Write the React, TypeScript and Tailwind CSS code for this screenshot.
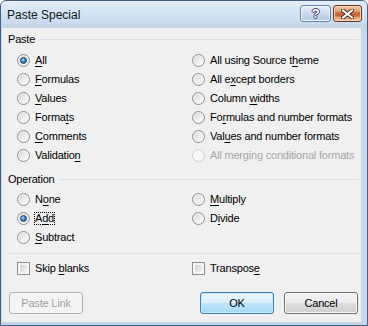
import React from "react";

const U = ({ c }: { c: string }) => <span className="underline decoration-1 underline-offset-[2px]">{c}</span>;

function Radio({ checked = false, disabled = false }: { checked?: boolean; disabled?: boolean }) {
  return (
    <span
      className={
        disabled
          ? "flex w-[13px] h-[13px] shrink-0 rounded-full border border-[#cfd1d3] bg-[#f7f7f7] items-center justify-center"
          : "flex w-[13px] h-[13px] shrink-0 rounded-full border border-[#8e8f8f] bg-gradient-to-br from-[#d2d2d2] via-[#ececec] to-[#ffffff] items-center justify-center shadow-[inset_0_0_0_1px_#f4f4f4]"
      }
    >
      {checked && (
        <span className="block w-[7px] h-[7px] rounded-full bg-[radial-gradient(circle_at_38%_35%,#b9dcfb_0%,#4c8fd2_40%,#12427e_100%)] border border-[#1d3f6e]" />
      )}
    </span>
  );
}

function Check() {
  return (
    <span className="flex w-[13px] h-[13px] shrink-0 border border-[#8e8f8f] bg-[#f6f6f6] p-[2px]">
      <span className="block flex-1 bg-gradient-to-br from-[#cdd3cf] to-[#f5f7f5]" />
    </span>
  );
}

function Row({ children, checked, disabled }: { children: React.ReactNode; checked?: boolean; disabled?: boolean }) {
  return (
    <div className="h-[19px] flex items-center gap-[5px] whitespace-nowrap">
      <Radio checked={checked} disabled={disabled} />
      <span className={disabled ? "text-[#a7a7a7] leading-[13px]" : "text-black leading-[13px]"}>{children}</span>
    </div>
  );
}

function Header({ label }: { label: string }) {
  return (
    <div className="h-[14px] flex items-center gap-[5px]">
      <span className="text-black leading-[14px]">{label}</span>
      <span className="flex-1 h-px bg-[#d5dfe7]" />
    </div>
  );
}

export default function App() {
  return (
    <div
      className="w-[368px] h-[326px] flex flex-col bg-[#c3d6ea] border border-[#45607e] rounded-t-[6px] overflow-hidden text-[11px] tracking-[-0.2px]"
      style={{ fontFamily: '"Liberation Sans", Arial, sans-serif' }}
    >
      <div className="h-[27px] shrink-0 flex items-start pl-[6px] pr-[5px] bg-gradient-to-b from-[#e3edf8] via-[#d2e2f2] to-[#c3d6ea]">
        <span className="text-[12px] leading-[12px] mt-[8px] text-[#101820] tracking-normal">Paste Special</span>
        <div className="ml-auto mt-[4px] flex gap-[2px]">
          <div className="w-[31px] h-[17px] rounded-[3px] border border-[#6c86a3] bg-gradient-to-b from-[#e4eef8] via-[#c9dbee] to-[#b3cbe3] flex items-center justify-center shadow-[inset_0_0_0_1px_#edf3fa]">
            <span
              className="text-[13px] font-bold leading-[13px] text-white"
              style={{ textShadow: "1px 0 0 #4a3a6a, -1px 0 0 #4a3a6a, 0 1px 0 #4a3a6a, 0 -1px 0 #4a3a6a" }}
            >
              ?
            </span>
          </div>
          <div className="w-[29px] h-[17px] rounded-[3px] border border-[#6b3a20] bg-[linear-gradient(to_bottom,#efc7a3_0%,#e3a678_35%,#c9683a_45%,#c9683a_65%,#e7ae82_80%,#efc09a_100%)] flex items-center justify-center shadow-[inset_0_0_0_1px_#f3d2b6]">
            <svg width="13" height="10" viewBox="0 0 13 10">
              <path d="M2 1.5 L11 8.5 M11 1.5 L2 8.5" stroke="#4a2a2a" strokeWidth="4" strokeLinecap="square" />
              <path d="M2 1.5 L11 8.5 M11 1.5 L2 8.5" stroke="#ffffff" strokeWidth="2" strokeLinecap="square" />
            </svg>
          </div>
        </div>
      </div>
      <div className="flex-1 flex pl-[1px] pr-[6px] pb-[3px]">
        <div className="flex-1 bg-[#f0f0f0] pl-[6px] pr-[2px] pt-[4px] flex flex-col">
          <Header label="Paste" />
          <div className="mt-[5px] pl-[9px] grid grid-cols-[175px_1fr]">
            <div className="flex flex-col">
              <Row checked><U c="A" />ll</Row>
              <Row><U c="F" />ormulas</Row>
              <Row><U c="V" />alues</Row>
              <Row>Forma<U c="t" />s</Row>
              <Row><U c="C" />omments</Row>
              <Row>Validatio<U c="n" /></Row>
            </div>
            <div className="flex flex-col">
              <Row>All using Source t<U c="h" />eme</Row>
              <Row>All e<U c="x" />cept borders</Row>
              <Row>Column <U c="w" />idths</Row>
              <Row>Fo<U c="r" />mulas and number formats</Row>
              <Row>Val<U c="u" />es and number formats</Row>
              <Row disabled>All merging conditional formats</Row>
            </div>
          </div>
          <div className="mt-[7px]">
            <Header label="Operation" />
          </div>
          <div className="mt-[4px] pl-[9px] grid grid-cols-[175px_1fr]">
            <div className="flex flex-col">
              <Row>N<U c="o" />ne</Row>
              <div className="h-[19px] flex items-center gap-[4px]">
                <Radio checked />
                <span className="leading-[13px] px-px outline outline-1 outline-dotted outline-black -outline-offset-1 text-black">
                  A<U c="d" />d
                </span>
              </div>
              <Row><U c="S" />ubtract</Row>
            </div>
            <div className="flex flex-col">
              <Row><U c="M" />ultiply</Row>
              <Row>D<U c="i" />vide</Row>
            </div>
          </div>
          <div className="mt-[6px] h-px bg-[#d5dfe7]" />
          <div className="mt-[5px] pl-[9px] grid grid-cols-[175px_1fr]">
            <div className="h-[19px] flex items-center gap-[5px]">
              <Check />
              <span className="leading-[13px] text-black">Skip <U c="b" />lanks</span>
            </div>
            <div className="h-[19px] flex items-center gap-[5px]">
              <Check />
              <span className="leading-[13px] text-black">Transpos<U c="e" /></span>
            </div>
          </div>
          <div className="mt-[14px] flex items-center pl-px pr-px">
            <div className="w-[74px] h-[22px] rounded-[3px] border border-[#adb2b5] bg-[#f4f4f4] flex items-center justify-center text-[#a2a2a2]">
              Paste Link
            </div>
            <div className="ml-auto w-[74px] h-[22px] rounded-[3px] border border-[#3c7fb1] bg-[linear-gradient(to_bottom,#eaf6fd_0%,#d9f0fc_50%,#bee6fd_50%,#a7d9f5_100%)] shadow-[inset_0_0_0_1px_#c8e8f8] flex items-center justify-center text-black">
              OK
            </div>
            <div className="ml-[10px] w-[74px] h-[22px] rounded-[3px] border border-[#707070] bg-[linear-gradient(to_bottom,#f2f2f2_0%,#ebebeb_50%,#dddddd_50%,#cfcfcf_100%)] shadow-[inset_0_0_0_1px_#fbfbfb] flex items-center justify-center text-black">
              Cancel
            </div>
          </div>
        </div>
      </div>
    </div>
  );
}
